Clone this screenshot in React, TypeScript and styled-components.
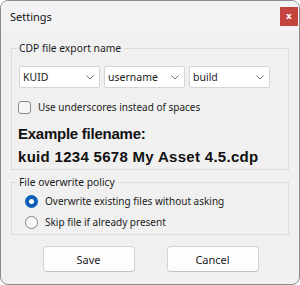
import React from 'react';
import styled, { createGlobalStyle } from 'styled-components';

const Global = createGlobalStyle`
  html, body { margin: 0; padding: 0; background: #ffffff; }
  * { box-sizing: border-box; }
`;

const Window = styled.div`
  width: 300px;
  height: 285px;
  border: 1px solid #8c8c8c;
  border-radius: 8px;
  background: #f0f0f0;
  overflow: hidden;
  display: flex;
  flex-direction: column;
  font-family: "Noto Sans", "Open Sans", sans-serif;
  font-size: 10px;
  color: #1b1b1b;
`;

const TitleBar = styled.div`
  flex: none;
  height: 30px;
  background: #f3f2f5;
  display: flex;
  align-items: center;
  justify-content: space-between;
  padding: 0 1px 0 9px;
`;

const Title = styled.div`
  font-size: 11px;
  color: #111;
`;

const CloseButton = styled.div`
  width: 18px;
  height: 19px;
  background: #c4443f;
  color: #fff;
  display: flex;
  align-items: center;
  justify-content: center;
  font-family: "DejaVu Sans", sans-serif;
  font-weight: bold;
  font-size: 9px;
  line-height: 1;
`;

const Client = styled.div`
  flex: 1;
  display: flex;
  flex-direction: column;
  padding: 10px 10px 0;
`;

const Group = styled.fieldset<{ $pt: number; $pb: number; $mt: number }>`
  margin: ${(p) => p.$mt}px 0 0;
  border: 1px solid #dcdcdc;
  padding: ${(p) => p.$pt}px 7px ${(p) => p.$pb}px;
  min-width: 0;
`;

const Legend = styled.legend`
  padding: 0 2px;
  margin-left: -2px;
  font-size: 10.3px;
  line-height: 14px;
`;

const SelectRow = styled.div`
  display: flex;
  gap: 4px;
`;

const Select = styled.div`
  width: 81px;
  height: 22px;
  background: #ffffff;
  border: 1px solid #d6d6d6;
  border-radius: 2px;
  display: flex;
  align-items: center;
  justify-content: space-between;
  padding: 0 5px 0 3px;
  font-size: 10.5px;
`;

const CheckRow = styled.div<{ $mt: number; $indent?: number }>`
  display: flex;
  align-items: center;
  gap: 7px;
  height: 16px;
  margin-top: ${(p) => p.$mt}px;
  padding-left: ${(p) => p.$indent ?? 0}px;
`;

const CheckBox = styled.span`
  width: 13px;
  height: 13px;
  border: 1px solid #8a8a8a;
  border-radius: 3px;
  background: #f6f6f6;
  margin-left: -1px;
`;

const Radio = styled.span<{ $on?: boolean }>`
  width: 13px;
  height: 13px;
  border-radius: 50%;
  display: flex;
  align-items: center;
  justify-content: center;
  border: ${(p) => (p.$on ? '0' : '1px solid #858585')};
  background: ${(p) => (p.$on ? '#0a5fb4' : '#f7f7f7')};
  &::after {
    content: '';
    display: ${(p) => (p.$on ? 'block' : 'none')};
    width: 5px;
    height: 5px;
    border-radius: 50%;
    background: #fff;
  }
`;

const BigText = styled.div<{ $mt: number; $ls: number }>`
  font-family: "Liberation Sans", Arial, sans-serif;
  font-weight: bold;
  font-size: 15px;
  line-height: 18px;
  letter-spacing: ${(p) => p.$ls}px;
  color: #111;
  margin-top: ${(p) => p.$mt}px;
  margin-left: -1px;
`;

const ButtonRow = styled.div`
  display: flex;
  justify-content: center;
  gap: 32px;
  margin-top: 11px;
  padding-left: 1px;
`;

const Button = styled.div`
  width: 92px;
  height: 26px;
  background: #fdfdfd;
  border: 1px solid #d3d3d3;
  border-bottom-color: #c4c4c4;
  border-radius: 4px;
  display: flex;
  align-items: center;
  justify-content: center;
  font-size: 11px;
`;

const Chevron = () => (
  <svg width="8" height="5" viewBox="0 0 8 5">
    <polyline points="0.5,0.5 4,4 7.5,0.5" fill="none" stroke="#6e6e6e" strokeWidth="1" />
  </svg>
);

export default function App() {
  return (
    <>
      <Global />
      <Window>
        <TitleBar>
          <Title>Settings</Title>
          <CloseButton>x</CloseButton>
        </TitleBar>
        <Client>
          <Group $pt={11} $pb={3} $mt={0}>
            <Legend>CDP file export name</Legend>
            <SelectRow>
              <Select>KUID<Chevron /></Select>
              <Select>username<Chevron /></Select>
              <Select>build<Chevron /></Select>
            </SelectRow>
            <CheckRow $mt={11}>
              <CheckBox />
              <span>Use underscores instead of spaces</span>
            </CheckRow>
            <BigText $mt={10} $ls={-0.25}>Example filename:</BigText>
            <BigText $mt={5} $ls={0.3}>kuid 1234 5678 My Asset 4.5.cdp</BigText>
          </Group>
          <Group $pt={4} $pb={4} $mt={5}>
            <Legend>File overwrite policy</Legend>
            <CheckRow $mt={0} $indent={6}>
              <Radio $on />
              <span>Overwrite existing files without asking</span>
            </CheckRow>
            <CheckRow $mt={5} $indent={6}>
              <Radio />
              <span>Skip file if already present</span>
            </CheckRow>
          </Group>
          <ButtonRow>
            <Button>Save</Button>
            <Button>Cancel</Button>
          </ButtonRow>
        </Client>
      </Window>
    </>
  );
}
